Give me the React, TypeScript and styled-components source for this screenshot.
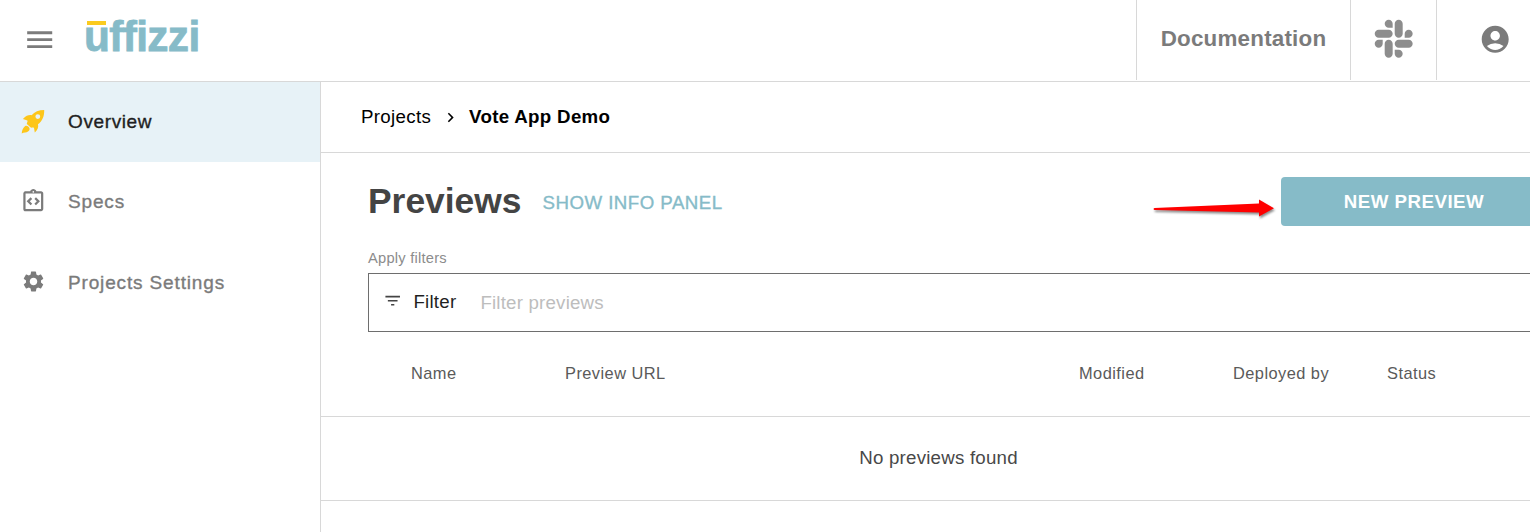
import React from "react";
import styled, { createGlobalStyle } from "styled-components";
import { MdMenu, MdAccountCircle, MdSettings, MdFilterList, MdChevronRight, MdOutlineIntegrationInstructions } from "react-icons/md";
import { FaSlack } from "react-icons/fa";

const line = "#d8d8d8";
const teal = "#86bbc8";
const grey = "#7b7b7b";

const GlobalStyle = createGlobalStyle`
  * { box-sizing: border-box; }
  body {
    margin: 0;
    background: #fff;
    overflow: hidden;
    font-family: "Liberation Sans", Arial, Helvetica, sans-serif;
  }
  svg { display: block; flex: none; }
`;

const Page = styled.div`
  display: flex;
  flex-direction: column;
  width: 100vw;
  height: 100vh;
  overflow: hidden;
`;

const Header = styled.header`
  display: flex;
  flex: none;
  height: 82px;
  padding-bottom: 1px;
  border-bottom: 1px solid ${line};
  color: ${grey};
`;

const MenuButton = styled.div`
  display: flex;
  align-items: center;
  width: 86px;
  padding-left: 23px;
  height: 79px;
`;

const Logo = styled.div`
  position: relative;
  margin: 12px auto 0 -2px;
  height: 50px;
  font-size: 42.4px;
  line-height: 50px;
  font-weight: 700;
  letter-spacing: -0.65px;
  color: ${teal};
  -webkit-text-stroke: 0.8px ${teal};
`;

const LogoBar = styled.span`
  position: absolute;
  left: 3px;
  top: 9px;
  width: 19px;
  height: 3.6px;
  background: #fbcb1f;
`;

const HeaderCell = styled.div<{ $width: number; $shift?: number }>`
  display: flex;
  align-items: center;
  justify-content: center;
  width: ${(p) => p.$width}px;
  height: 80px;
  padding-left: ${(p) => p.$shift ?? 0}px;
  padding-bottom: 2px;
  border-left: 1px solid ${line};
`;

const DocLink = styled.a`
  font-size: 22.4px;
  font-weight: 700;
  letter-spacing: 0.2px;
`;

const Body = styled.div`
  display: flex;
  flex: 1;
  min-height: 0;
`;

const Sidebar = styled.nav`
  flex: none;
  width: 321px;
  border-right: 1px solid ${line};
`;

const NavItem = styled.a<{ $active?: boolean }>`
  display: flex;
  align-items: center;
  height: 80.3px;
  padding-left: 20px;
  font-size: 19px;
  letter-spacing: ${(p) => (p.$active ? 0.62 : 0.85)}px;
  color: ${(p) => (p.$active ? "#1f1f1f" : grey)};
  -webkit-text-stroke: 0.35px currentColor;
  background: ${(p) => (p.$active ? "#e7f2f7" : "transparent")};
`;

const NavIcon = styled.span<{ $color?: string }>`
  display: flex;
  justify-content: center;
  width: 26px;
  margin-right: 22px;
  padding-bottom: 2px;
  color: ${(p) => p.$color ?? "inherit"};
`;

const Main = styled.main`
  flex: 1;
  min-width: 0;
  overflow: hidden;
`;

const Breadcrumb = styled.div`
  display: flex;
  align-items: center;
  height: 71px;
  padding-left: 40px;
  font-size: 18.7px;
  letter-spacing: 0.32px;
  color: #000;
  border-bottom: 1px solid ${line};
  svg { margin: 0 9px 0 10px; }
`;

const TitleRow = styled.div`
  display: flex;
  align-items: center;
  width: 1226px;
  height: 49px;
  margin-top: 24px;
  padding-left: 47px;
`;

const Title = styled.h1`
  margin: 0;
  padding-bottom: 2px;
  font-size: 35.4px;
  font-weight: 700;
  line-height: 46px;
  color: #444;
`;

const InfoToggle = styled.span`
  margin-left: 21px;
  padding-top: 2px;
  font-size: 18.7px;
  letter-spacing: 0.47px;
  color: ${teal};
  -webkit-text-stroke: 0.35px ${teal};
`;

const NewPreviewButton = styled.button`
  position: relative;
  width: 266px;
  height: 49px;
  margin-left: auto;
  padding: 0;
  border: 0;
  border-radius: 4px;
  background: ${teal};
  color: #fff;
  font: 700 18.7px/49px "Liberation Sans", Arial, sans-serif;
  letter-spacing: 0.5px;
`;

const Arrow = styled.svg`
  position: absolute;
  left: -130px;
  top: 19px;
  overflow: visible;
  filter: drop-shadow(1px 2px 1px rgba(0, 0, 0, 0.45));
`;

const FilterLabel = styled.div`
  margin: 24px 0 0 47px;
  font-size: 14.7px;
  line-height: 16px;
  letter-spacing: 0.23px;
  color: #8c8c8c;
`;

const FilterBox = styled.div`
  display: flex;
  align-items: center;
  width: 1180px;
  height: 59px;
  margin: 7px 0 0 47px;
  padding: 0 0 2px 14px;
  border: 1px solid #6e6e6e;
  font-size: 18.7px;
  color: #1f1f1f;
`;

const FilterIcon = styled(MdFilterList)`
  margin-bottom: 1px;
  color: #444;
`;

const FilterName = styled.span`
  margin-left: 11px;
  width: 67px;
  letter-spacing: 0.25px;
`;

const Placeholder = styled.span`
  padding-top: 2px;
  letter-spacing: 0.2px;
  color: #bdbdbd;
`;

const TableHead = styled.div`
  display: grid;
  grid-template-columns: 154px 514px 154px 154px 154px;
  align-items: center;
  height: 85px;
  padding: 0 0 1px 90px;
  font-size: 16.4px;
  letter-spacing: 0.45px;
  color: #5a5a5a;
  border-bottom: 1px solid ${line};
`;

const EmptyRow = styled.div`
  display: flex;
  align-items: center;
  justify-content: center;
  width: 1235px;
  height: 84px;
  padding-bottom: 2px;
  font-size: 18.7px;
  letter-spacing: 0.22px;
  color: #484848;
`;

const TableEnd = styled.div`
  margin-top: -1px;
  border-bottom: 1px solid ${line};
`;

const RocketIcon = () => (
  <svg width="24" height="25" viewBox="0 0 24 25" fill="currentColor">
    <path
      fillRule="evenodd"
      d="M23.2 0.9C17.8 0.9 13.6 2.8 10.6 6.2C7.6 5.8 5.4 6.6 1.9 10L6.4 11.4C6.9 12.4 5.8 13.6 5.8 15L9.8 18.6C11 18.8 12.4 18.2 13 19L13.8 23.6C16.8 20.8 17.6 18.2 17 15.3C21.6 11.6 23.4 7 23.2 0.9ZM16.8 5.2A2.4 2.4 0 1 1 16.8 10A2.4 2.4 0 1 1 16.8 5.2Z"
    />
    <path d="M4.2 17C5.6 16.2 7.4 17.2 8.3 18.7C9 20.2 8.4 21.6 7 22.6C5.3 23.7 3 23.6 0.7 24.4C0.9 21.5 2 18.6 4.2 17Z" />
  </svg>
);

export default function App() {
  return (
    <Page>
      <GlobalStyle />
      <Header>
        <MenuButton><MdMenu size={33.4} /></MenuButton>
        <Logo>uffizzi<LogoBar /></Logo>
        <HeaderCell $width={214}><DocLink>Documentation</DocLink></HeaderCell>
        <HeaderCell $width={86}><FaSlack size={43.4} color="#8d8d8d" /></HeaderCell>
        <HeaderCell $width={94} $shift={23}><MdAccountCircle size={32.4} /></HeaderCell>
      </Header>
      <Body>
        <Sidebar>
          <NavItem $active>
            <NavIcon $color="#fdc61a"><RocketIcon /></NavIcon>Overview
          </NavItem>
          <NavItem>
            <NavIcon><MdOutlineIntegrationInstructions size={26.6} /></NavIcon>Specs
          </NavItem>
          <NavItem>
            <NavIcon><MdSettings size={25} /></NavIcon>Projects Settings
          </NavItem>
        </Sidebar>
        <Main>
          <Breadcrumb>
            <span>Projects</span>
            <MdChevronRight size={19} />
            <b>Vote App Demo</b>
          </Breadcrumb>
          <TitleRow>
            <Title>Previews</Title>
            <InfoToggle>SHOW INFO PANEL</InfoToggle>
            <NewPreviewButton>
              <Arrow width="124" height="24" viewBox="0 0 124 24">
                <path d="M3.5 12 L108 7.5 V3.5 L123 12.2 L108 20.5 V16.5 L3.5 14 Q1.5 13 3.5 12Z" fill="#f00" />
              </Arrow>
              NEW PREVIEW
            </NewPreviewButton>
          </TitleRow>
          <FilterLabel>Apply filters</FilterLabel>
          <FilterBox>
            <FilterIcon size={19.4} />
            <FilterName>Filter</FilterName>
            <Placeholder>Filter previews</Placeholder>
          </FilterBox>
          <TableHead>
            <span>Name</span>
            <span>Preview URL</span>
            <span>Modified</span>
            <span>Deployed by</span>
            <span>Status</span>
          </TableHead>
          <EmptyRow>No previews found</EmptyRow>
          <TableEnd />
        </Main>
      </Body>
    </Page>
  );
}
